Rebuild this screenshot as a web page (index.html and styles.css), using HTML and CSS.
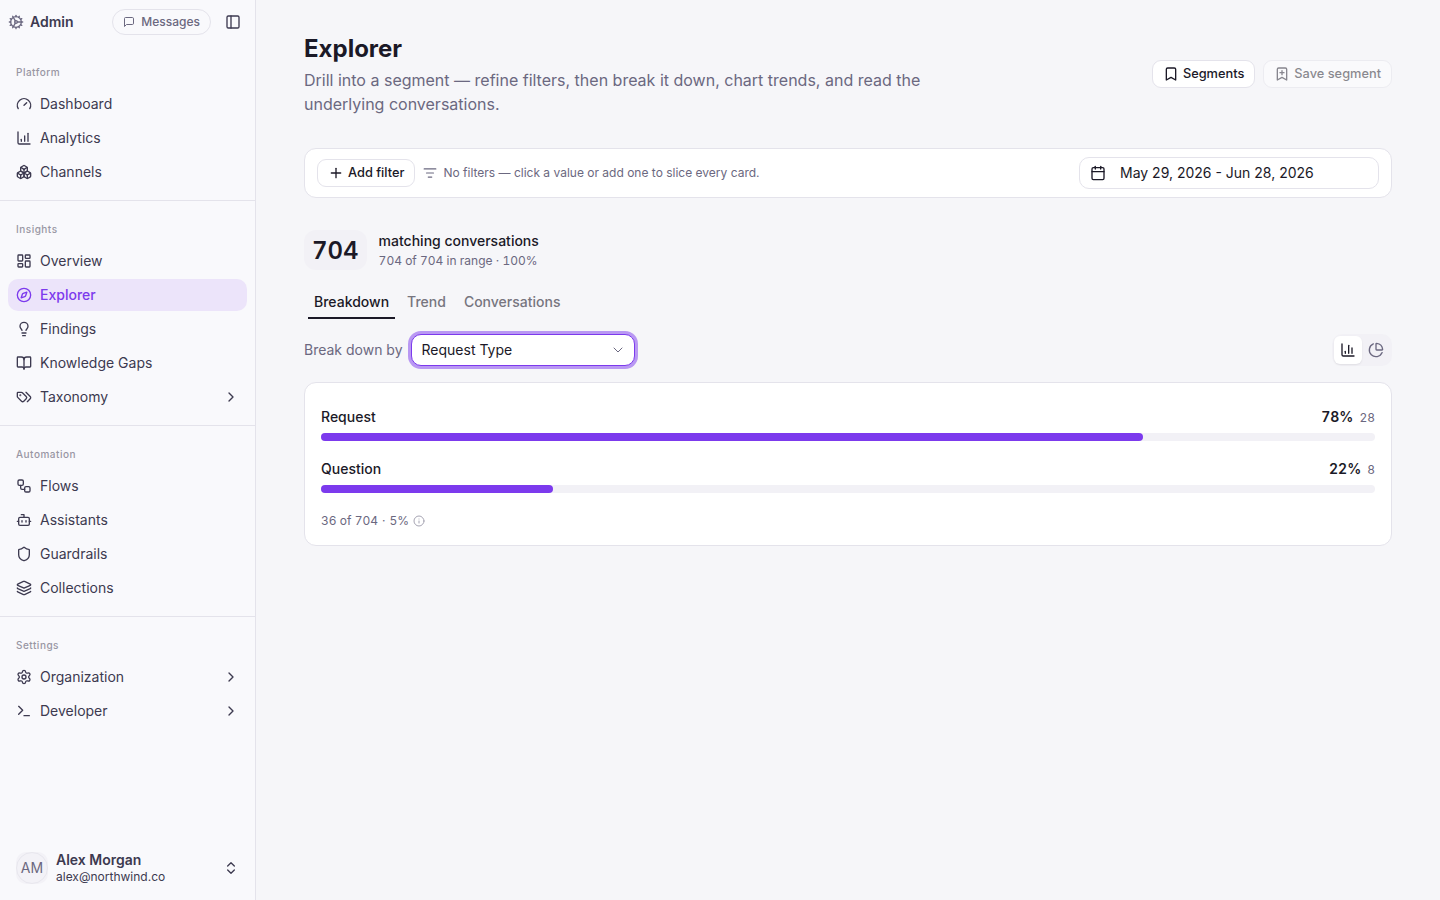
FILE: index.html
```html
<!DOCTYPE html>
<html lang="en">
<head>
    <meta charset="UTF-8">
    <meta name="viewport" content="width=device-width, initial-scale=1.0">
    <title>Explorer</title>
    <link rel="stylesheet" href="styles.css">
</head>
<body>
<div class="app">
    <aside class="sidebar">
        <div class="sidebar-header">
            <svg class="icon brand-icon" viewBox="0 0 24 24"><path d="M11 10.27 7 3.34"/><path d="m11 13.73-4 6.93"/><path d="M12 22v-2"/><path d="M12 2v2"/><path d="M14 12h8"/><path d="m17 20.66-1-1.73"/><path d="m17 3.34-1 1.73"/><path d="M2 12h2"/><path d="m20.66 17-1.73-1"/><path d="m20.66 7-1.73 1"/><path d="m3.34 17 1.73-1"/><path d="m3.34 7 1.73 1"/><circle cx="12" cy="12" r="2"/><circle cx="12" cy="12" r="8"/></svg>
            <span class="brand">Admin</span>
            <button class="messages-btn">
                <svg class="icon" viewBox="0 0 24 24"><path d="M21 15a2 2 0 0 1-2 2H7l-4 4V5a2 2 0 0 1 2-2h14a2 2 0 0 1 2 2z"/></svg>
                Messages
            </button>
            <button class="collapse-btn" aria-label="Toggle sidebar">
                <svg class="icon" viewBox="0 0 24 24"><rect width="18" height="18" x="3" y="3" rx="2"/><path d="M9 3v18"/></svg>
            </button>
        </div>

        <nav class="nav">
            <div class="nav-group">
                <div class="nav-label">Platform</div>
                <a class="nav-item">
                    <svg class="icon" viewBox="0 0 24 24"><path d="m12 14 4-4"/><path d="M3.34 19a10 10 0 1 1 17.32 0"/></svg>
                    <span>Dashboard</span>
                </a>
                <a class="nav-item">
                    <svg class="icon" viewBox="0 0 24 24"><path d="M13 17V9"/><path d="M18 17V5"/><path d="M3 3v16a2 2 0 0 0 2 2h16"/><path d="M8 17v-3"/></svg>
                    <span>Analytics</span>
                </a>
                <a class="nav-item">
                    <svg class="icon" viewBox="0 0 24 24"><path d="M2.97 12.92A2 2 0 0 0 2 14.63v3.24a2 2 0 0 0 .97 1.71l3 1.8a2 2 0 0 0 2.06 0L12 19v-5.5l-5-3-4.03 2.42Z"/><path d="m7 16.5-4.74-2.85"/><path d="m7 16.5 5-3"/><path d="M7 16.5v5.17"/><path d="M12 13.5V19l3.97 2.38a2 2 0 0 0 2.06 0l3-1.8a2 2 0 0 0 .97-1.71v-3.24a2 2 0 0 0-.97-1.71L17 10.5l-5 3Z"/><path d="m17 16.5-5-3"/><path d="m17 16.5 4.74-2.85"/><path d="M17 16.5v5.17"/><path d="M7.97 4.42A2 2 0 0 0 7 6.13v4.37l5 3 5-3V6.13a2 2 0 0 0-.97-1.71l-3-1.8a2 2 0 0 0-2.06 0l-3 1.8Z"/><path d="M12 8 7.26 5.15"/><path d="m12 8 4.74-2.85"/><path d="M12 13.5V8"/></svg>
                    <span>Channels</span>
                </a>
            </div>

            <div class="nav-group">
                <div class="nav-label">Insights</div>
                <a class="nav-item">
                    <svg class="icon" viewBox="0 0 24 24"><rect width="7" height="9" x="3" y="3" rx="1"/><rect width="7" height="5" x="14" y="3" rx="1"/><rect width="7" height="9" x="14" y="12" rx="1"/><rect width="7" height="5" x="3" y="16" rx="1"/></svg>
                    <span>Overview</span>
                </a>
                <a class="nav-item active">
                    <svg class="icon" viewBox="0 0 24 24"><path d="m16.24 7.76-1.804 5.411a2 2 0 0 1-1.265 1.265L7.76 16.24l1.804-5.411a2 2 0 0 1 1.265-1.265z"/><circle cx="12" cy="12" r="10"/></svg>
                    <span>Explorer</span>
                </a>
                <a class="nav-item">
                    <svg class="icon" viewBox="0 0 24 24"><path d="M15 14c.2-1 .7-1.7 1.5-2.5 1-.9 1.5-2.2 1.5-3.5A6 6 0 0 0 6 8c0 1 .2 2.2 1.5 3.5.7.7 1.3 1.5 1.5 2.5"/><path d="M9 18h6"/><path d="M10 22h4"/></svg>
                    <span>Findings</span>
                </a>
                <a class="nav-item">
                    <svg class="icon" viewBox="0 0 24 24"><path d="M12 7v14"/><path d="M3 18a1 1 0 0 1-1-1V4a1 1 0 0 1 1-1h5a4 4 0 0 1 4 4 4 4 0 0 1 4-4h5a1 1 0 0 1 1 1v13a1 1 0 0 1-1 1h-6a3 3 0 0 0-3 3 3 3 0 0 0-3-3z"/></svg>
                    <span>Knowledge Gaps</span>
                </a>
                <a class="nav-item">
                    <svg class="icon" viewBox="0 0 24 24"><path d="m15 5 6.3 6.3a2.4 2.4 0 0 1 0 3.4L17 19"/><path d="M9.586 5.586A2 2 0 0 0 8.172 5H3a1 1 0 0 0-1 1v5.172a2 2 0 0 0 .586 1.414L8.29 18.29a2.426 2.426 0 0 0 3.42 0l3.58-3.58a2.426 2.426 0 0 0 0-3.42z"/><circle cx="6.5" cy="9.5" r=".5" fill="currentColor"/></svg>
                    <span>Taxonomy</span>
                    <svg class="icon chevron" viewBox="0 0 24 24"><path d="m9 18 6-6-6-6"/></svg>
                </a>
            </div>

            <div class="nav-group">
                <div class="nav-label">Automation</div>
                <a class="nav-item">
                    <svg class="icon" viewBox="0 0 24 24"><rect width="8" height="8" x="3" y="3" rx="2"/><path d="M7 11v4a2 2 0 0 0 2 2h4"/><rect width="8" height="8" x="13" y="13" rx="2"/></svg>
                    <span>Flows</span>
                </a>
                <a class="nav-item">
                    <svg class="icon" viewBox="0 0 24 24"><path d="M12 8V4H8"/><rect width="16" height="12" x="4" y="8" rx="2"/><path d="M2 14h2"/><path d="M20 14h2"/><path d="M15 13v2"/><path d="M9 13v2"/></svg>
                    <span>Assistants</span>
                </a>
                <a class="nav-item">
                    <svg class="icon" viewBox="0 0 24 24"><path d="M20 13c0 5-3.5 7.5-7.66 8.95a1 1 0 0 1-.67-.01C7.5 20.5 4 18 4 13V6a1 1 0 0 1 1-1c2 0 4.5-1.2 6.24-2.72a1.17 1.17 0 0 1 1.52 0C14.51 3.81 17 5 19 5a1 1 0 0 1 1 1z"/></svg>
                    <span>Guardrails</span>
                </a>
                <a class="nav-item">
                    <svg class="icon" viewBox="0 0 24 24"><path d="M12.83 2.18a2 2 0 0 0-1.66 0L2.6 6.08a1 1 0 0 0 0 1.83l8.58 3.91a2 2 0 0 0 1.66 0l8.58-3.9a1 1 0 0 0 0-1.83z"/><path d="M2 12a1 1 0 0 0 .58.91l8.6 3.91a2 2 0 0 0 1.65 0l8.58-3.9A1 1 0 0 0 22 12"/><path d="M2 17a1 1 0 0 0 .58.91l8.6 3.91a2 2 0 0 0 1.65 0l8.58-3.9A1 1 0 0 0 22 17"/></svg>
                    <span>Collections</span>
                </a>
            </div>

            <div class="nav-group">
                <div class="nav-label">Settings</div>
                <a class="nav-item">
                    <svg class="icon" viewBox="0 0 24 24"><path d="M9.671 4.136a2.34 2.34 0 0 1 4.659 0 2.34 2.34 0 0 0 3.319 1.915 2.34 2.34 0 0 1 2.33 4.033 2.34 2.34 0 0 0 0 3.831 2.34 2.34 0 0 1-2.33 4.033 2.34 2.34 0 0 0-3.319 1.915 2.34 2.34 0 0 1-4.659 0 2.34 2.34 0 0 0-3.32-1.915 2.34 2.34 0 0 1-2.33-4.033 2.34 2.34 0 0 0 0-3.831A2.34 2.34 0 0 1 6.35 6.051a2.34 2.34 0 0 0 3.319-1.915"/><circle cx="12" cy="12" r="3"/></svg>
                    <span>Organization</span>
                    <svg class="icon chevron" viewBox="0 0 24 24"><path d="m9 18 6-6-6-6"/></svg>
                </a>
                <a class="nav-item">
                    <svg class="icon" viewBox="0 0 24 24"><path d="M12 19h8"/><path d="m4 17 6-6-6-6"/></svg>
                    <span>Developer</span>
                    <svg class="icon chevron" viewBox="0 0 24 24"><path d="m9 18 6-6-6-6"/></svg>
                </a>
            </div>
        </nav>

        <div class="user">
            <div class="avatar"><span class="avatar-initials">AM</span></div>
            <div class="user-info">
                <div class="user-name">Alex Morgan</div>
                <div class="user-email">alex@northwind.co</div>
            </div>
            <svg class="icon chevron" viewBox="0 0 24 24"><path d="m7 15 5 5 5-5"/><path d="m7 9 5-5 5 5"/></svg>
        </div>
    </aside>

    <main class="main">
        <header class="page-header">
            <div class="page-intro">
                <h1>Explorer</h1>
                <p>Drill into a segment — refine filters, then break it down, chart trends, and read the underlying conversations.</p>
            </div>
            <div class="page-actions">
                <button class="btn">
                    <svg class="icon" viewBox="0 0 24 24"><path d="m19 21-7-4-7 4V5a2 2 0 0 1 2-2h10a2 2 0 0 1 2 2v16z"/></svg>
                    Segments
                </button>
                <button class="btn" disabled>
                    <svg class="icon" viewBox="0 0 24 24"><path d="m19 21-7-4-7 4V5a2 2 0 0 1 2-2h10a2 2 0 0 1 2 2v16z"/><path d="M12 7v6"/><path d="M15 10H9"/></svg>
                    Save segment
                </button>
            </div>
        </header>

        <section class="filter-bar">
            <button class="btn add-filter">
                <svg class="icon" viewBox="0 0 24 24"><path d="M5 12h14"/><path d="M12 5v14"/></svg>
                Add filter
            </button>
            <div class="filter-hint">
                <svg class="icon" viewBox="0 0 24 24"><path d="M2 5h20"/><path d="M6 12h12"/><path d="M9 19h6"/></svg>
                <span>No filters — click a value or add one to slice every card.</span>
            </div>
            <button class="date-picker">
                <svg class="icon" viewBox="0 0 24 24"><path d="M8 2v4"/><path d="M16 2v4"/><rect width="18" height="18" x="3" y="4" rx="2"/><path d="M3 10h18"/></svg>
                May 29, 2026 - Jun 28, 2026
            </button>
        </section>

        <section class="summary">
            <div class="summary-count">704</div>
            <div>
                <div class="summary-title">matching conversations</div>
                <div class="summary-sub">704 of 704 in range · 100%</div>
            </div>
        </section>

        <div class="tabs">
            <button class="tab active">Breakdown</button>
            <button class="tab">Trend</button>
            <button class="tab">Conversations</button>
        </div>

        <div class="toolbar">
            <span class="toolbar-label">Break down by</span>
            <button class="select">
                <span>Request Type</span>
                <svg class="icon" viewBox="0 0 24 24"><path d="m6 9 6 6 6-6"/></svg>
            </button>
            <div class="view-toggle">
                <button class="toggle active" aria-label="Bar chart">
                    <svg class="icon" viewBox="0 0 24 24"><path d="M3 3v16a2 2 0 0 0 2 2h16"/><path d="M18 17V9"/><path d="M13 17V5"/><path d="M8 17v-3"/></svg>
                </button>
                <button class="toggle" aria-label="Pie chart">
                    <svg class="icon" viewBox="0 0 24 24"><path d="M21 12c.552 0 1.005-.449.95-.998a10 10 0 0 0-8.953-8.951c-.55-.055-.998.398-.998.95v8a1 1 0 0 0 1 1z"/><path d="M21.21 15.89A10 10 0 1 1 8 2.83"/></svg>
                </button>
            </div>
        </div>

        <section class="card">
            <div class="bar-row">
                <div class="bar-head">
                    <span class="bar-name">Request</span>
                    <span class="bar-pct">78%</span>
                    <span class="bar-count">28</span>
                </div>
                <div class="bar-track"><div class="bar-fill" style="width: 78%"></div></div>
            </div>
            <div class="bar-row">
                <div class="bar-head">
                    <span class="bar-name">Question</span>
                    <span class="bar-pct">22%</span>
                    <span class="bar-count">8</span>
                </div>
                <div class="bar-track"><div class="bar-fill" style="width: 22%"></div></div>
            </div>
            <div class="card-footer">
                <span>36 of 704</span>
                <span>·</span>
                <span>5%</span>
                <svg class="icon" viewBox="0 0 24 24"><circle cx="12" cy="12" r="10"/><path d="M12 16v-4"/><path d="M12 8h.01"/></svg>
            </div>
        </section>
    </main>
</div>
</body>
</html>
```

FILE: styles.css
```css
* {
    box-sizing: border-box;
}
body {
    margin: 0;
    font-family: Inter, "Liberation Sans", sans-serif;
    font-size: 14px;
    line-height: 20px;
    color: #1b1927;
    background: #f6f6f9;
}
button {
    font: inherit;
    color: inherit;
    margin: 0;
    padding: 0;
    border: none;
    background: none;
    white-space: nowrap;
}
.icon {
    width: 16px;
    height: 16px;
    flex-shrink: 0;
    fill: none;
    stroke: currentColor;
    stroke-width: 2;
    stroke-linecap: round;
    stroke-linejoin: round;
}
.app {
    display: flex;
    height: 100vh;
}

/* Sidebar */
.sidebar {
    display: flex;
    flex-direction: column;
    width: 256px;
    flex-shrink: 0;
    background: #f9f9fc;
    border-right: 1px solid #e4e3eb;
    color: #3d3a50;
}
.sidebar-header {
    display: flex;
    align-items: center;
    height: 44px;
    padding: 0 8px;
}
.brand-icon {
    color: #6b6880;
}
.brand {
    margin-left: 6px;
    font-weight: 600;
    flex: 1;
}
.messages-btn {
    display: flex;
    align-items: center;
    gap: 6px;
    height: 26px;
    padding: 0 10px;
    border: 1px solid #e4e3eb;
    border-radius: 13px;
    font-size: 12px;
    font-weight: 500;
    color: #6b6880;
}
.messages-btn .icon {
    width: 12px;
    height: 12px;
}
.collapse-btn {
    display: flex;
    align-items: center;
    justify-content: center;
    width: 28px;
    height: 28px;
    margin-left: 8px;
}
.nav {
    flex: 1;
}
.nav-group {
    display: flex;
    flex-direction: column;
    gap: 2px;
    padding: 12px 8px;
    border-bottom: 1px solid #e4e3eb;
}
.nav-group:last-child {
    border-bottom: none;
}
.nav-label {
    height: 32px;
    margin-bottom: -2px;
    padding: 0 8px;
    line-height: 32px;
    font-size: 10px;
    font-weight: 500;
    letter-spacing: 0.5px;
    color: #9896a3;
}
.nav-item {
    display: flex;
    align-items: center;
    gap: 8px;
    height: 32px;
    padding: 0 8px;
    border-radius: 10px;
}
.nav-item.active {
    background: #ece4fa;
    color: #7c3aed;
    font-weight: 500;
}
.chevron {
    margin-left: auto;
}
.user {
    display: flex;
    align-items: center;
    gap: 8px;
    height: 48px;
    margin: 8px;
    padding: 0 8px;
}
.avatar {
    width: 32px;
    height: 32px;
    border-radius: 10px;
    background: #f3f2f7;
}
.avatar-initials {
    display: flex;
    align-items: center;
    justify-content: center;
    height: 32px;
    border: 1px solid #e8e7ee;
    border-radius: 50%;
    color: #6b6880;
}
.user-name {
    line-height: 16px;
    padding-bottom: 1px;
    font-weight: 600;
}
.user-email {
    line-height: 16px;
    font-size: 12px;
}

/* Page */
.main {
    flex: 1;
    padding: 32px 48px;
}
.page-header {
    display: flex;
    align-items: center;
    justify-content: space-between;
}
.page-intro {
    width: 672px;
}
h1 {
    margin: 0 0 3px;
    padding-top: 1px;
    font-size: 24px;
    line-height: 32px;
    font-weight: 700;
}
.page-intro p {
    margin: 0;
    font-size: 16px;
    line-height: 24px;
    color: #6b6880;
}
.page-actions {
    display: flex;
    gap: 8px;
}
.btn {
    display: flex;
    align-items: center;
    gap: 4px;
    height: 28px;
    padding: 0 10px;
    border: 1px solid #e4e3eb;
    border-radius: 9px;
    background: #fff;
    font-size: 12.8px;
    font-weight: 500;
}
.btn:disabled {
    opacity: 0.5;
}
.filter-bar {
    display: flex;
    align-items: center;
    gap: 8px;
    height: 50px;
    margin-top: 32px;
    padding: 0 12px;
    border: 1px solid #e4e3eb;
    border-radius: 12px;
    background: #fff;
}
.filter-hint {
    display: flex;
    align-items: center;
    gap: 6px;
    font-size: 12px;
    color: #6b6880;
}
.filter-hint .icon {
    width: 14px;
    height: 14px;
}
.date-picker {
    display: flex;
    align-items: center;
    gap: 14px;
    width: 300px;
    height: 32px;
    margin-left: auto;
    padding: 0 10px;
    border: 1px solid #e4e3eb;
    border-radius: 10px;
}
.summary {
    display: flex;
    align-items: center;
    gap: 12px;
    margin-top: 32px;
}
.summary-count {
    padding: 5px 8px 3px;
    border-radius: 12px;
    background: #f2f1f6;
    font-size: 24px;
    line-height: 32px;
    font-weight: 600;
    font-variant-numeric: tabular-nums;
}
.summary-title {
    font-weight: 500;
}
.summary-sub {
    margin-top: 2px;
    font-size: 12px;
    line-height: 16px;
    color: #6b6880;
    font-variant-numeric: tabular-nums;
}
.tabs {
    display: flex;
    gap: 6px;
    margin: 15px 0 0 4px;
}
.tab {
    height: 34px;
    padding: 2px 6px 0;
    border-bottom: 2px solid transparent;
    font-weight: 500;
    color: #77757f;
}
.tab.active {
    border-bottom-color: #1b1927;
    color: #1b1927;
}
.toolbar {
    display: flex;
    align-items: center;
    gap: 8px;
    height: 32px;
    margin-top: 15px;
}
.toolbar-label {
    color: #6b6880;
}
.select {
    display: flex;
    align-items: center;
    justify-content: space-between;
    width: 224px;
    height: 32px;
    padding: 0 8px 0 10px;
    border: 1px solid #7c3aed;
    border-radius: 10px;
    background: #fff;
    box-shadow: 0 0 0 3px rgba(124, 58, 237, 0.5);
}
.select .icon {
    color: #6b6880;
    stroke-width: 1.5;
}
.view-toggle {
    display: flex;
    margin-left: auto;
    padding: 2px;
    border-radius: 10px;
    background: #f2f1f6;
}
.toggle {
    display: flex;
    align-items: center;
    justify-content: center;
    width: 28px;
    height: 28px;
    border-radius: 6px;
    color: #6b6880;
}
.toggle.active {
    background: #fff;
    color: #1b1927;
    box-shadow: 0 1px 2px rgba(0, 0, 0, 0.08);
}

/* Breakdown card */
.card {
    height: 164px;
    margin-top: 16px;
    padding: 24px 16px 0;
    border: 1px solid #e4e3eb;
    border-radius: 12px;
    background: #fff;
}
.bar-row {
    margin-bottom: 18px;
}
.bar-head {
    display: flex;
    align-items: baseline;
    height: 20px;
    margin-bottom: 6px;
    font-variant-numeric: tabular-nums;
}
.bar-name {
    flex: 1;
    font-weight: 500;
}
.bar-pct {
    font-weight: 600;
}
.bar-count {
    margin-left: 6px;
    font-size: 12px;
    color: #6b6880;
}
.bar-track {
    height: 8px;
    border-radius: 4px;
    background: #f2f1f6;
}
.bar-fill {
    height: 8px;
    border-radius: 4px;
    background: #7c3aed;
}
.card-footer {
    display: flex;
    align-items: center;
    gap: 4px;
    font-size: 12px;
    color: #6b6880;
    font-variant-numeric: tabular-nums;
}
.card-footer .icon {
    width: 12px;
    height: 12px;
    opacity: 0.6;
}
```
